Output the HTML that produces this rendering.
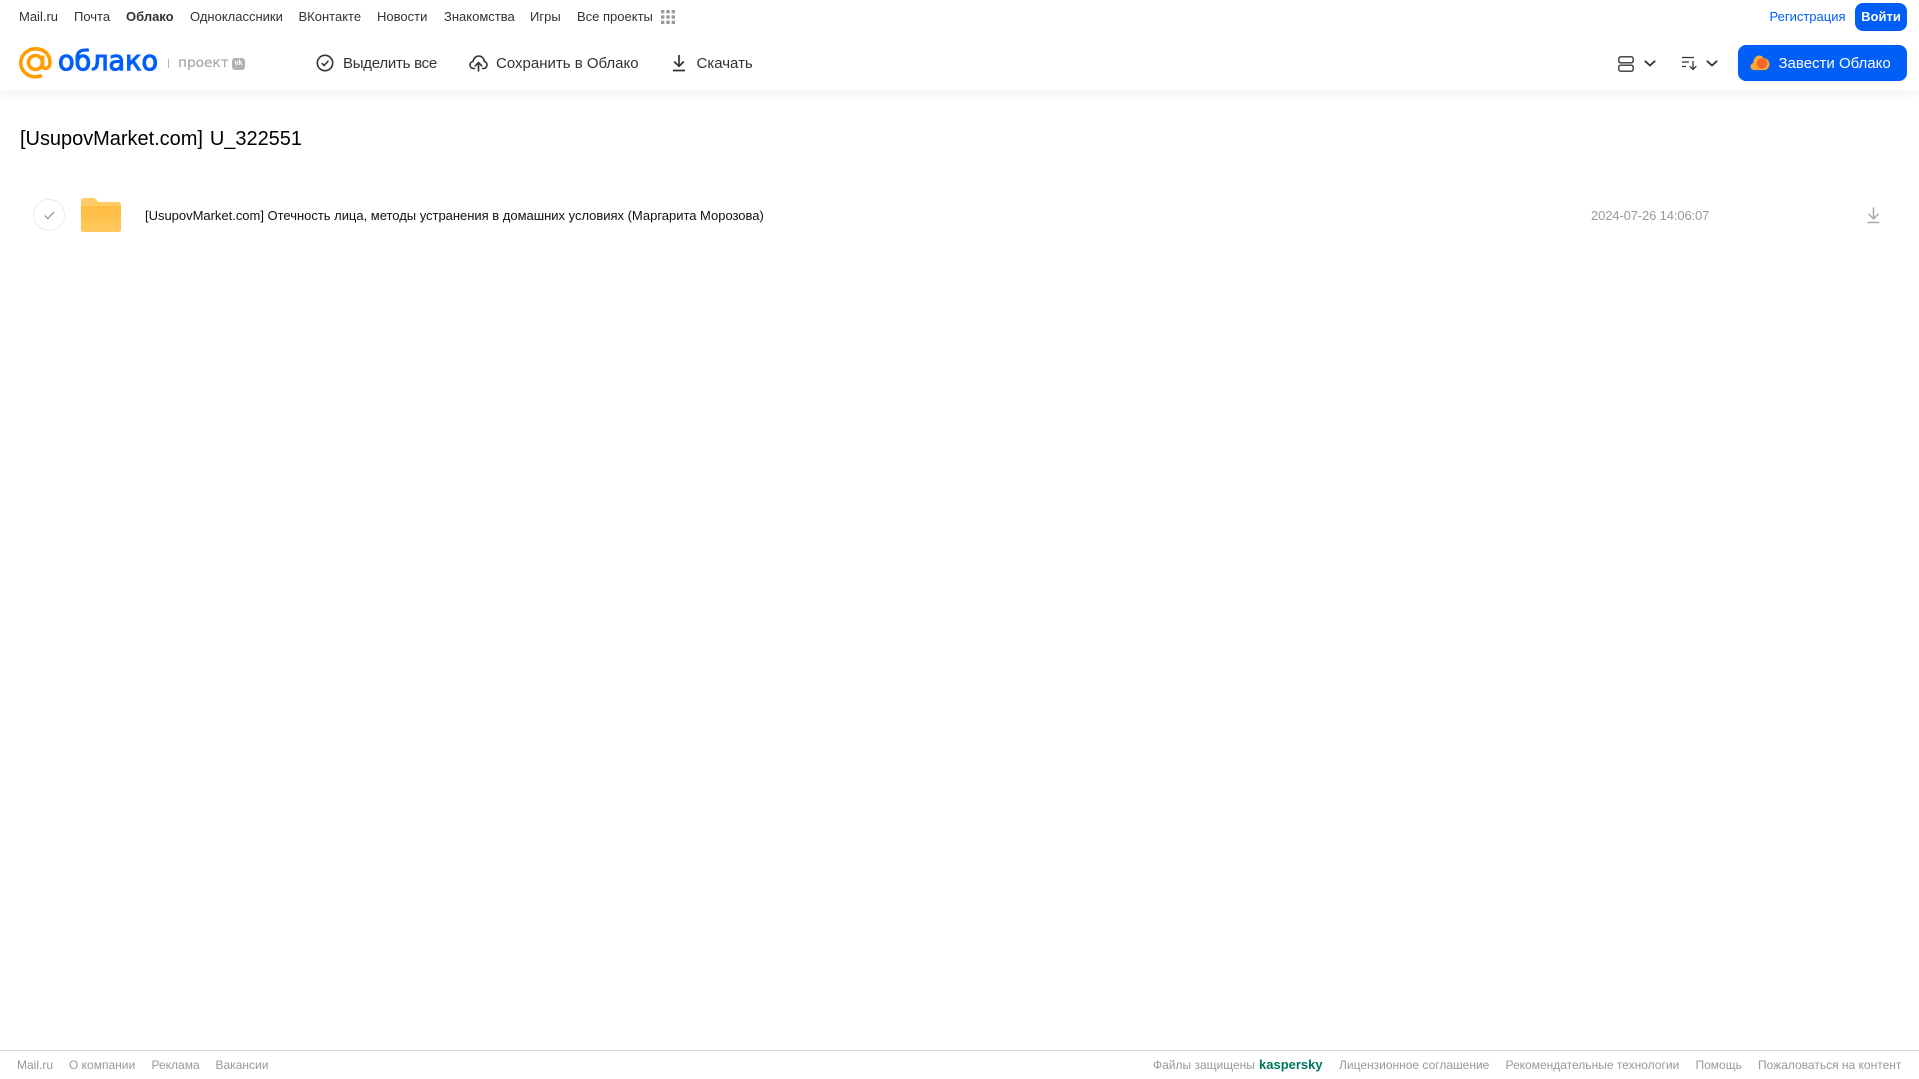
<!DOCTYPE html>
<html lang="ru"><head><meta charset="utf-8"><title>Облако</title>
<style>
html,body{margin:0;padding:0;background:#fff}
body{width:1919px;height:1079px;position:relative;overflow:hidden;font-family:"Liberation Sans",sans-serif}
.t{position:absolute;white-space:nowrap;line-height:20px;height:20px}
.n{top:7px;font-size:13px;color:#333}
.a{top:54px;font-size:15px;color:#333}
.f{top:1055px;font-size:12px;color:#999}
svg{position:absolute;overflow:visible}
#hd{position:absolute;left:0;top:0;width:1919px;height:91px;background:#fff;box-shadow:0 2px 10px rgba(0,0,0,.07)}
#ln{position:absolute;left:0;top:1050px;width:1919px;height:1px;background:#d8d8d8}
.b{position:absolute;background:#005ff9;color:#fff;white-space:nowrap}
</style></head><body>
<div id="hd"></div>
<span class="t n" style="left:19px">Mail.ru</span>
<span class="t n" style="left:74px">Почта</span>
<span class="t n" style="left:126px;font-weight:bold">Облако</span>
<span class="t n" style="left:190px">Одноклассники</span>
<span class="t n" style="left:298.500px">ВКонтакте</span>
<span class="t n" style="left:377px">Новости</span>
<span class="t n" style="left:444px">Знакомства</span>
<span class="t n" style="left:530px">Игры</span>
<span class="t n" style="left:577px">Все проекты</span>
<svg style="left:661px;top:10px" width="14" height="14" fill="#999"><rect x="0" y="0" width="3.4" height="3.4" rx=".8"/><rect x="5.3" y="0" width="3.4" height="3.4" rx=".8"/><rect x="10.6" y="0" width="3.4" height="3.4" rx=".8"/><rect x="0" y="5.3" width="3.4" height="3.4" rx=".8"/><rect x="5.3" y="5.3" width="3.4" height="3.4" rx=".8"/><rect x="10.6" y="5.3" width="3.4" height="3.4" rx=".8"/><rect x="0" y="10.6" width="3.4" height="3.4" rx=".8"/><rect x="5.3" y="10.6" width="3.4" height="3.4" rx=".8"/><rect x="10.6" y="10.6" width="3.4" height="3.4" rx=".8"/></svg>
<span class="t" style="left:1769.500px;top:7px;font-size:13px;color:#005ff9">Регистрация</span>
<div class="b" style="left:1855px;top:3px;width:52px;height:28px;border-radius:8px;font-size:13px;font-weight:bold;line-height:28px;text-align:center">Войти</div>

<svg style="left:19px;top:47px" width="33" height="32" viewBox="0 0 33 32" fill="none" stroke="#ff9e00" stroke-width="3.6"><circle cx="16.5" cy="15.5" r="7"/><path d="M23.5 8.5v9.5c0 5 7.500 4.500 7.500-2.500C31 7 24.500 1.800 16.500 1.800 8.500 1.800 1.800 8 1.800 15.800s6.500 14 14.500 14c2.500 0 4.500-.4 6.500-1.400"/></svg>
<svg style="left:58px;top:44px" width="102" height="34"><text x="0" y="26" font-family="DejaVu Sans" font-size="27.5" fill="#005ff9" stroke="#005ff9" stroke-width="1.100" textLength="100" lengthAdjust="spacingAndGlyphs">облако</text></svg>
<div style="position:absolute;left:168px;top:59px;width:1px;height:9px;background:#b5b5b5"></div>
<span class="t" style="left:178px;top:53px;font-family:'DejaVu Sans',sans-serif;font-size:13.700px;color:#aaa;-webkit-text-stroke:.25px #aaa">проект</span>
<div style="position:absolute;left:232px;top:58px;width:13px;height:12px;border-radius:3px;background:#b3b3b3;color:#fff;font-size:7px;font-weight:bold;line-height:12px;text-align:center">vk</div>

<svg style="left:316px;top:54px" width="18" height="18" fill="none" stroke="#333" stroke-width="1.600"><circle cx="9" cy="9" r="7.700"/><path d="M5.800 9.200l2.300 2.300 4.300-4.700"/></svg>
<span class="t a" style="left:343px;letter-spacing:-.25px">Выделить все</span>
<svg style="left:469px;top:54px" width="19" height="18" fill="none" stroke="#333" stroke-width="1.600" stroke-linejoin="round" stroke-linecap="round"><path d="M5.500 14.500H4.600C2.500 14.500 1 13 1 11c0-1.800 1.300-3.200 3-3.500C4.500 4.500 6.800 2 9.700 2c3 0 5.300 2.300 5.600 5.300 1.600.4 2.700 1.900 2.700 3.600 0 2-1.500 3.600-3.500 3.600h-1"/><path d="M9.500 17V9M6.300 11.800l3.200-3.300 3.200 3.300"/></svg>
<span class="t a" style="left:496px">Сохранить в Облако</span>
<svg style="left:672px;top:54px" width="14" height="18" fill="none" stroke="#333" stroke-width="1.700"><path d="M7 1v11M2.200 7.500L7 12.300l4.800-4.800M1 16.500h12"/></svg>
<span class="t a" style="left:696.500px">Скачать</span>

<svg style="left:1618px;top:56px" width="16" height="16" fill="none" stroke="#333" stroke-width="1.400"><rect x=".8" y=".8" width="14.400" height="6" rx="2"/><rect x=".8" y="9.200" width="14.400" height="6" rx="2"/></svg>
<svg style="left:1644px;top:60px" width="12" height="7" fill="none" stroke="#333" stroke-width="1.800"><path d="M.8.800L6 5.500 11.200.800"/></svg>
<svg style="left:1682px;top:56px" width="16" height="15" fill="none" stroke="#333" stroke-width="1.300"><path d="M0 1.500h12M0 6h7M0 10.500h4M11 5v8.500M7.700 10.200l3.300 3.300 3.300-3.300"/></svg>
<svg style="left:1706px;top:60px" width="12" height="7" fill="none" stroke="#333" stroke-width="1.800"><path d="M.8.800L6 5.500 11.200.800"/></svg>
<div class="b" style="left:1738px;top:45px;width:169px;height:36px;border-radius:8px"></div>
<svg style="left:1750px;top:54px" width="20" height="17"><path d="M4 16C1.700 16 .5 14.300.5 12.400.5 10.500 2 9.300 3.300 9 3.500 5 5.800 1.500 9.300 1.500c2.200 0 3.500 1.200 4.300 2.700 3-.2 5.900 2.600 5.900 6 0 3.300-2.500 5.800-5.500 5.800z" fill="#ffa930"/><circle cx="12" cy="9.500" r="5.300" fill="#f4652a"/></svg>
<span class="t" style="left:1778.500px;top:54px;font-size:15px;color:#fff">Завести Облако</span>

<span class="t" style="left:20px;top:128px;font-size:20px;line-height:22px;height:22px;letter-spacing:-.03px;word-spacing:1.500px;color:#000">[UsupovMarket.com] U_322551</span>
<div style="position:absolute;left:33px;top:199px;width:30px;height:30px;border:1px solid #ececec;border-radius:50%"></div>
<svg style="left:44px;top:211px" width="11" height="9" fill="none" stroke="#999" stroke-width="1.300"><path d="M.8 4.600l3 3L10 1"/></svg>
<svg style="left:81px;top:198px" width="40" height="34"><defs><linearGradient id="g" x1="0" y1="0" x2="0" y2="1"><stop offset="0" stop-color="#ffbc40"/><stop offset="1" stop-color="#ffc95f"/></linearGradient></defs><path d="M0 3Q0 0 3 0h9q2.500 0 4 2.500 1 1.500 3 1.500h18q3 0 3 3v24q0 3-3 3H3q-3 0-3-3z" fill="#ffcb66"/><path d="M0 8h40v23q0 3-3 3H3q-3 0-3-3z" fill="url(#g)"/></svg>
<span class="t" style="left:145px;top:205.500px;font-size:13px;letter-spacing:-.015px;color:#111">[UsupovMarket.com] Отечность лица, методы устранения в домашних условиях (Маргарита Морозова)</span>
<span class="t" style="left:1591px;top:205.500px;font-size:13px;letter-spacing:-.13px;color:#999">2024-07-26 14:06:07</span>
<svg style="left:1867px;top:207px" width="13" height="17" fill="none" stroke="#aaa" stroke-width="1.500"><path d="M6.500 .5v11M1.500 6.800l5 5 5-5M.5 15.500h12"/></svg>

<div id="ln"></div>
<span class="t f" style="left:17px">Mail.ru</span>
<span class="t f" style="left:69px">О компании</span>
<span class="t f" style="left:151.500px">Реклама</span>
<span class="t f" style="left:215.500px">Вакансии</span>
<span class="t f" style="left:1153px">Файлы защищены</span>
<span class="t f" style="left:1259px;font-size:13px;font-weight:bold;color:#00785f">kaspersky</span>
<span class="t f" style="left:1339px">Лицензионное соглашение</span>
<span class="t f" style="left:1505.500px">Рекомендательные технологии</span>
<span class="t f" style="left:1695.500px">Помощь</span>
<span class="t f" style="left:1758px">Пожаловаться на контент</span>
</body></html>
